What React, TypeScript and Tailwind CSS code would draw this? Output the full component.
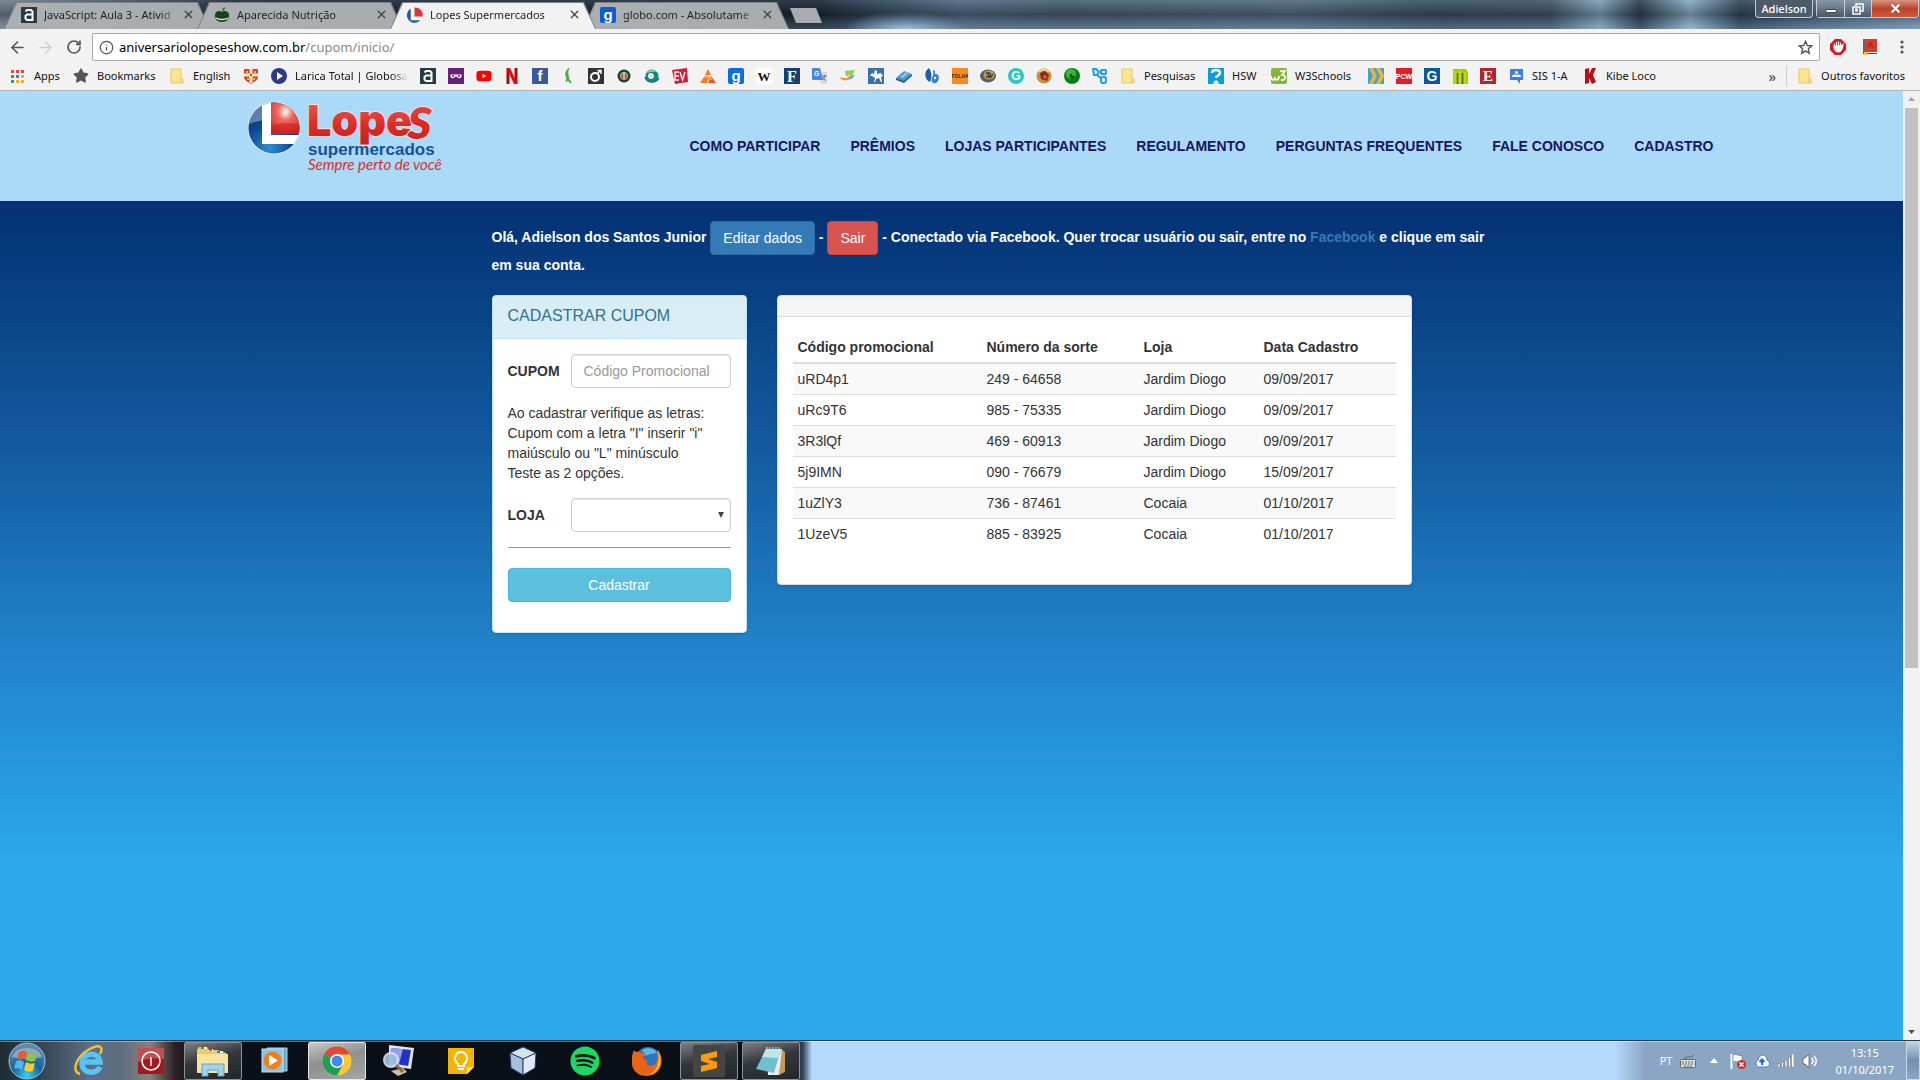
import React, { useState } from "react";
import { FaStar, FaSpotify, FaYoutube } from "react-icons/fa";
import { ArrowLeft, ArrowRight, RotateCw, Info, X } from "lucide-react";

const uiFont = "font-['Noto_Sans','Open_Sans',sans-serif]";

/* ---------- small drawings ---------- */

function Svg({ children, size = 16 }: { children: React.ReactNode; size?: number }) {
  return (
    <svg width={size} height={size} viewBox="0 0 16 16" aria-hidden="true" className="shrink-0">
      {children}
    </svg>
  );
}

function Tile({ bg, fg = "#fff", text, size = 13, serif = false, round = 0 }: { bg: string; fg?: string; text: string; size?: number; serif?: boolean; round?: number }) {
  return (
    <Svg>
      <rect width="16" height="16" rx={round} fill={bg} />
      <text x="8" y={8 + size * 0.36} textAnchor="middle" fontSize={size} fontWeight="700" fill={fg} fontFamily={serif ? "Liberation Serif" : "Liberation Sans"}>
        {text}
      </text>
    </Svg>
  );
}

/* square-cornered "a" mark on a dark tile */
const Alura = () => (
  <Svg>
    <rect width="16" height="16" fill="#263b45" />
    <path d="M4.500 4.500L6 3h4l1.500 1.500V13H6l-1.500-1.500V9L6 7.500h5" fill="none" stroke="#fff" strokeWidth="2" />
  </Svg>
);

const GreenApple = () => (
  <Svg>
    <path d="M8 5c2-2 7-1 7 3s-2 7-7 7-7-3-7-7 5-5 7-3z" fill="#17401c" />
    <path d="M8 4c0-2 1-3 3-4 0 2-1 4-3 4z" fill="#2c6b2f" />
    <path d="M2 11c3 2 9 2 12 0" stroke="#dbe8db" strokeWidth="1.500" fill="none" />
  </Svg>
);

const Folder = () => (
  <Svg>
    <path d="M2 1h10v10h2v4H2z" fill="#ffe48f" stroke="#e6c65c" />
    <path d="M12 11v4" stroke="#e6c65c" />
  </Svg>
);

const LopesBall = () => (
  <Svg>
    <path d="M6 1a7.500 7.500 0 1 0 8 11H6z" fill="#1c5fa8" />
    <path d="M5 1v11h9.500" stroke="#fff" strokeWidth="2.500" fill="none" />
    <path d="M7.500 0.500A7.500 7.500 0 0 1 15.500 9.500H7.500z" fill="#e0323c" />
  </Svg>
);

const AppsGrid = () => (
  <Svg>
    {["#e8453c", "#e8453c", "#e8453c", "#2e9e5b", "#3b78e7", "#f4b400", "#2e9e5b", "#f4b400", "#f4b400"].map((c, i) => (
      <rect key={i} x={1 + (i % 3) * 5} y={2 + Math.floor(i / 3) * 5} width="3" height="3" fill={c} />
    ))}
  </Svg>
);

const Crest = () => (
  <Svg>
    <path d="M1 1h14v8c0 3-4 5-7 7-3-2-7-4-7-7z" fill="#d2452d" />
    <path d="M8 1v14M1 7h14" stroke="#f6e7c0" strokeWidth="3" />
    <path d="M3 3h2v2H3zM11 3h2v2h-2zM4 10h2v2H4zM10 10h2v2h-2z" fill="#f0b93a" />
    <path d="M7 6h2v2H7z" fill="#c33" />
  </Svg>
);

const Play = () => (
  <Svg>
    <circle cx="8" cy="8" r="8" fill="#2d3a8c" />
    <path d="M6 4l6 4-6 4z" fill="#fff" />
  </Svg>
);

const Mask = () => (
  <Svg>
    <rect width="16" height="16" fill="#68217a" />
    <path d="M2.500 6.500h11c1 4-3 5-5.500 1.500C5.500 11.500 1.500 10.500 2.500 6.500z" fill="#fff" />
    <circle cx="5" cy="8" r="1" fill="#68217a" />
    <circle cx="11" cy="8" r="1" fill="#68217a" />
  </Svg>
);

const Leaf = () => (
  <Svg>
    <path d="M9 0C5 4 5 7 7 10l-1 4 3-3C8 7 7 4 9 0z" fill="#53a548" stroke="#53a548" />
    <path d="M7 10l4 5" stroke="#53a548" strokeWidth="2" />
  </Svg>
);

const Male = () => (
  <Svg>
    <rect width="16" height="16" fill="#333" />
    <circle cx="7" cy="9" r="4" fill="none" stroke="#fff" strokeWidth="2" />
    <path d="M9 6l4-4M9.500 2.500H13V6" stroke="#fff" strokeWidth="1.500" fill="none" />
  </Svg>
);

const Seal = () => (
  <Svg>
    <circle cx="8" cy="8" r="6.500" fill="#1f3d2a" />
    <circle cx="8" cy="8" r="4.200" fill="#7fae7f" />
    <path d="M5.500 11V7L8 5l2.500 2v4z" fill="#b5523c" />
    <path d="M8 4v7" stroke="#fff" />
  </Svg>
);

const Swirl = () => (
  <Svg>
    <circle cx="8" cy="8" r="6.500" fill="#158a6c" />
    <path d="M3 5c2-3 7-4 10-1-4-1-7 0-10 1z" fill="#bfeadf" />
    <circle cx="7" cy="8" r="3" fill="#d4f0ea" />
    <path d="M1 9c2 6 10 7 14 1" stroke="#0d6fb0" strokeWidth="1.500" fill="none" />
  </Svg>
);

const Ev = () => (
  <Svg>
    <path d="M0 2L15 0l1 14-13 2z" fill="#cf1f3c" />
    <path d="M7 4H3v8h4M3 8h4M8 4l2.500 8L13 4" stroke="#fff" strokeWidth="1.300" fill="none" />
  </Svg>
);

const Pyramid = () => (
  <Svg>
    <path d="M8 1l3 6H5zM4 9l5 1-2 5H0z" fill="#f47b20" />
    <path d="M11 8l5 7H8z" fill="#e8562a" />
    <path d="M5 8l7 3" stroke="#f6a04d" strokeWidth="2" />
  </Svg>
);

const Translate = () => (
  <Svg>
    <path d="M6 4h9v12H9z" fill="#d9dbdd" />
    <path d="M0 0h8l3 12H1a1 1 0 0 1-1-1z" fill="#4a86e8" />
    <text x="2" y="8" fontSize="7" fontWeight="700" fill="#fff" fontFamily="Liberation Sans">G</text>
    <path d="M10 8h5M12.500 7v1c0 2-1 3-2 4M11 9l3 4" stroke="#6c7a89" fill="none" />
  </Svg>
);

const Cups = () => (
  <Svg>
    <path d="M5 3l10-1-3 6-6 1z" fill="#8ed14b" />
    <path d="M9 7h6l-3 4-5 1z" fill="#6db3e8" />
    <path d="M0 9c5 2 8 1 11-1-1 4-6 6-10 3z" fill="#f2913a" />
    <path d="M1 8c3 2 6 1 9-1" stroke="#fff" fill="none" />
  </Svg>
);

const Knight = () => (
  <Svg>
    <rect width="16" height="16" fill="#3a72a8" />
    <path d="M2 8l2-3 2 1 1-4 2 1v3l4-1 2 3-2 1 1 5h-1l-2-4-3 1-1 3H6l1-4-3-2z" fill="#fff" />
  </Svg>
);

const Chip = () => (
  <Svg>
    <path d="M0 10l8-7 8 3-8 8z" fill="#4d96c9" />
    <path d="M0 10l8 3 8-7v2l-8 7-8-3z" fill="#23608f" />
    <path d="M4 9l6-5 3 1-6 5z" fill="#8dc4e6" />
  </Svg>
);

const Drops = () => (
  <Svg>
    <path d="M5 0c3 5 3 10 1 14C1 12-1 4 5 0z" fill="#1d5fae" />
    <path d="M9 2c3 0 2 3 2 4 5-1 5 6 1 9-4 1-5-2-4-5s2-5 1-8z" fill="#2f83d6" />
    <circle cx="11" cy="10" r="1.200" fill="#fff" />
  </Svg>
);

const Badge = () => (
  <Svg>
    <ellipse cx="8" cy="8" rx="8" ry="6.500" fill="#56616d" />
    <ellipse cx="9" cy="7" rx="5.500" ry="4.500" fill="#c8982e" />
    <path d="M6 5h3l-1 2 2 2H6M10 5l1 4 2-3" stroke="#2b3f66" strokeWidth="1.300" fill="none" />
  </Svg>
);

const Guard = () => (
  <Svg>
    <circle cx="8" cy="8" r="7.500" fill="#c49238" />
    <path d="M4 5l5-2 4 4-2 6-6-2z" fill="#8d2a1c" />
    <path d="M3 4c3-3 7-3 10 0" stroke="#f3d98b" strokeWidth="2" fill="none" />
    <circle cx="9" cy="9" r="2" fill="#d9583c" />
  </Svg>
);

const GreenOrb = () => (
  <Svg>
    <circle cx="8" cy="8" r="8" fill="#0f7b14" />
    <circle cx="7" cy="6" r="5" fill="#2cc233" />
    <circle cx="8" cy="8" r="2.500" fill="#0b4d10" />
    <circle cx="9" cy="7" r="0.800" fill="#bdf5bd" />
  </Svg>
);

const BlueBoxes = () => (
  <Svg>
    <g fill="none" stroke="#1d9bf0" strokeWidth="2">
      <path d="M1 1h3l3 3-2 3H2z" />
      <rect x="9" y="2" width="5" height="4" rx="1" />
      <rect x="9" y="9" width="5" height="6" rx="2" />
      <path d="M5 7l4 3" />
    </g>
  </Svg>
);

const Hsw = () => (
  <Svg>
    <rect width="16" height="16" fill="#0d9ddb" />
    <path d="M4 5c0-4 8-4 8 0 0 3-4 2-4 5" stroke="#fff" strokeWidth="2.500" fill="none" />
    <circle cx="8" cy="15" r="2.500" fill="#fff" />
  </Svg>
);

const W3 = () => (
  <Svg>
    <rect width="16" height="16" rx="2" fill="#85b53d" />
    <path d="M0 8c0 5 4 5 4 1 0 4 4 4 4-1M9 3h5l-3 4c5 0 4 6-1 5" stroke="#fff" strokeWidth="1.700" fill="none" />
  </Svg>
);

const Chevrons = () => (
  <Svg>
    <rect width="16" height="16" fill="#3fa2db" />
    <path d="M1 0h4l4 8-4 8H1l4-8zM8 0h4l4 8-4 8H8l4-8z" fill="#f2b233" />
  </Svg>
);

const Bars = () => (
  <Svg>
    <path d="M1 1h13l2 3v12H1z" fill="#a7cc00" />
    <path d="M5.500 5v11M10.500 5v11" stroke="#4d6b00" strokeWidth="1.500" />
    <path d="M3 3v12M8 3v12M13 4v11" stroke="#cde83c" />
  </Svg>
);

const Sis = () => (
  <Svg>
    <path d="M2 1h13v11h-3v4l-3-4H2z" fill="#3f7de8" />
    <circle cx="8.500" cy="4.500" r="1.500" fill="#fff" />
    <path d="M4 9c0-3 3-3 4.500-2C10 6 13 6 13 9z" fill="#fff" />
  </Svg>
);

const Netflix = () => (
  <Svg>
    <path d="M4 0v16M12 0v16" stroke="#b1060f" strokeWidth="3" />
    <path d="M2.500 0h3.500l7.500 16H10z" fill="#e50914" />
  </Svg>
);

const Kibe = () => (
  <Svg>
    <path d="M3 1l4-1v6l3-6h4l-3 7 3 7-4 2-3-6v5l-4 1z" fill="#b3111b" />
  </Svg>
);

/* ---------- browser chrome ---------- */

type Tab = { title: string; icon: React.ReactNode; active?: boolean };

const tabs: Tab[] = [
  { title: "JavaScript: Aula 3 - Ativid", icon: <Alura /> },
  { title: "Aparecida Nutrição", icon: <GreenApple /> },
  { title: "Lopes Supermercados", icon: <LopesBall />, active: true },
  { title: "globo.com - Absolutame", icon: <Tile bg="#0b5ed2" text="g" size={15} round={2} /> },
];

function TabStrip() {
  return (
    <div className="flex h-[29px] shrink-0 items-start justify-between bg-[linear-gradient(180deg,rgba(120,140,160,0.25),rgba(15,25,38,0.4)_50%,rgba(130,160,190,0.3)),radial-gradient(ellipse_60px_18px_at_905px_29px,#a9d4f7,transparent),linear-gradient(90deg,#7e8d98_0px,#17222c_240px,#17222c_820px,#33475a_880px,#566f87_960px,#4f6375_1060px,#5c7186_1290px,#3d5163_1440px,#46596a_1550px,#8fb6ca_1600px,#2c3d4e_1640px,#9cc4d8_1690px,#33475a_1740px,#4f6a80_1800px,#7f9fbd_1920px)]">
      <div role="tablist" className="flex items-start pt-0.5 pl-1">
        {tabs.map((t) => (
          <div
            key={t.title}
            className={
              "mr-[-13px] h-[27px] w-[206px] bg-[#7f8387] [clip-path:polygon(0_100%,12px_0,194px_0,100%_100%)] " + (t.active ? "relative z-10" : "")
            }
          >
            <div
              className={
                "flex h-[27px] items-center pr-[15px] pb-0.5 pl-[17px] [clip-path:polygon(1px_100%,13px_1px,193px_1px,205px_100%)] " +
                (t.active ? "bg-[#f2f2f2]" : "bg-[linear-gradient(90deg,#adb0b3,#a9acae)]")
              }
            >
              {t.icon}
              <button role="tab" aria-selected={!!t.active} className="ml-[7px] w-[136px] text-left text-[11px] leading-4 whitespace-nowrap text-[#222] [mask-image:linear-gradient(90deg,#000_85%,transparent)]">
                {t.title}
              </button>
              <button aria-label="Fechar guia" className="ml-auto text-[#444]">
                <X size={13} strokeWidth={2.5} />
              </button>
            </div>
          </div>
        ))}
        <button aria-label="Nova guia" className="mt-1.5 ml-[14px] h-[15px] w-[32px] bg-[#a9acae] [clip-path:polygon(0_0,26px_0,100%_100%,6px_100%)]" />
      </div>
      <div className="flex h-[18px] items-stretch pr-px text-white">
        <button className="mr-[3px] w-[58px] rounded-b border border-t-0 border-[#c5ccd4] bg-[#4d5a68] text-[11px] leading-4 font-medium shadow">Adielson</button>
        <div className="flex rounded-b border border-t-0 border-[#c5ccd4]">
          <button aria-label="Minimizar" className="flex w-[27px] items-center justify-center bg-[linear-gradient(#8799a9,#46586a)]">
            <span className="mt-1 h-1 w-3 rounded-xs border border-[#445] bg-white" />
          </button>
          <button aria-label="Restaurar" className="flex w-[28px] items-center justify-center border-x border-[#c5ccd4] bg-[linear-gradient(#8799a9,#46586a)]">
            <svg width="12" height="12" viewBox="0 0 12 12" fill="none" stroke="#fff" strokeWidth="1.500">
              <path d="M4 3V1h7v7H9" />
              <rect x="1" y="4" width="7" height="7" />
              <rect x="4" y="6" width="1" height="2" />
            </svg>
          </button>
          <button aria-label="Fechar" className="flex w-[46px] items-center justify-center rounded-br bg-[linear-gradient(#d99483,#c0412b_50%,#cc5a3c)]">
            <X size={13} strokeWidth={4} />
          </button>
        </div>
      </div>
    </div>
  );
}

function Toolbar() {
  return (
    <div className="flex h-[36px] shrink-0 items-center bg-[#f2f2f2] pr-[10px] pl-2 text-[#555]">
      <button aria-label="Voltar"><ArrowLeft size={19} strokeWidth={2} /></button>
      <button aria-label="Avançar" className="ml-[9px] text-[#cfcfcf]"><ArrowRight size={19} strokeWidth={2} /></button>
      <button aria-label="Recarregar" className="ml-[11px]"><RotateCw size={16} strokeWidth={2.5} /></button>
      <div className="ml-[10px] flex h-[28px] flex-1 items-center rounded-xs border border-[#a9a9a9] bg-white pr-1.5 pl-1.5">
        <Info size={15} strokeWidth={2} className="shrink-0" />
        <a href="#url" className="ml-[5px] flex-1 text-[13px] leading-5 text-[#888]">
          <span className="text-black">aniversariolopeseshow.com.br</span>/cupom/inicio/
        </a>
        <button aria-label="Favoritar">
          <svg width="15" height="15" viewBox="0 0 16 16" fill="none" stroke="#555" strokeWidth="1.500">
            <path d="M8 1.500l1.900 4.400 4.700.4-3.600 3.100 1.100 4.700L8 11.600l-4.100 2.500L5 9.400 1.400 6.300l4.700-.4z" />
          </svg>
        </button>
      </div>
      <button aria-label="Bloqueador" className="ml-[10px]">
        <Svg>
          <path d="M5 0h6l5 5v6l-5 5H5l-5-5V5z" fill="#e1141b" />
          <path d="M4.500 8V4.500M6.500 7V3M8.500 7V2.500M10.500 8V3.500M4 7h7.500l1.500-1.500c0 4-2 7-4 7.500-3 0-5-2-5-6z" stroke="#fff" strokeWidth="1.200" fill="#fff" />
        </Svg>
      </button>
      <button aria-label="Dicionário" className="ml-[16px]">
        <Svg>
          <path d="M1 0h14v13H1z" fill="#d63b30" />
          <path d="M1 0h3v14H1z" fill="#666" />
          <path d="M1 14h14v1H1z" fill="#b7222a" />
          <path d="M6 9l2.500-6L11 9M7 7h3" stroke="#a3231b" fill="none" />
          <path d="M2 13h3v3H2z" fill="#f3c13a" />
        </Svg>
      </button>
      <button aria-label="Menu" className="ml-[16px]">
        <svg width="16" height="16" viewBox="0 0 16 16" fill="#555">
          <circle cx="8" cy="3" r="1.600" /><circle cx="8" cy="8" r="1.600" /><circle cx="8" cy="13" r="1.600" />
        </svg>
      </button>
    </div>
  );
}

type Mark = { icon: React.ReactNode; label?: string; width?: string; name?: string };

const marks: Mark[] = [
  { icon: <AppsGrid />, label: "Apps", width: "w-[51px]" },
  { icon: <FaStar size={15} className="w-4 shrink-0 text-[#555]" />, label: "Bookmarks", width: "w-[84px]" },
  { icon: <Folder />, label: "English", width: "w-[62px]" },
  { icon: <Crest />, name: "Brasão" },
  { icon: <Play />, label: "Larica Total | Globosa", width: "w-[137px]" },
  { icon: <Alura />, name: "Alura" },
  { icon: <Mask />, name: "Máscara" },
  { icon: <FaYoutube size={16} className="text-[#f00]" />, name: "YouTube" },
  { icon: <Netflix />, name: "Netflix" },
  { icon: <Tile bg="#3b5998" text="f" size={15} />, name: "Facebook" },
  { icon: <Leaf />, name: "Folha verde" },
  { icon: <Male />, name: "Portal" },
  { icon: <Seal />, name: "Selo" },
  { icon: <Swirl />, name: "Globo" },
  { icon: <Ev />, name: "EV" },
  { icon: <Pyramid />, name: "Pirâmide" },
  { icon: <Tile bg="#0b6ee0" text="g" size={15} round={2} />, name: "globo.com" },
  { icon: <Tile bg="#fff" fg="#111" text="W" size={13} serif round={3} />, name: "Wikipedia" },
  { icon: <Tile bg="#14406f" text="F" size={16} serif />, name: "F" },
  { icon: <Translate />, name: "Tradutor" },
  { icon: <Cups />, name: "Xícaras" },
  { icon: <Knight />, name: "Cavaleiro" },
  { icon: <Chip />, name: "Chip" },
  { icon: <Drops />, name: "Gotas" },
  { icon: <Tile bg="#f68b1f" fg="#3a2410" text="FOLHA" size={5} />, name: "Folha" },
  { icon: <Badge />, name: "Emblema" },
  { icon: <Tile bg="#2cc8bd" text="G" size={12} round={8} />, name: "G" },
  { icon: <Guard />, name: "Guarda" },
  { icon: <GreenOrb />, name: "Orbe" },
  { icon: <BlueBoxes />, name: "Caixas" },
  { icon: <Folder />, label: "Pesquisas", width: "w-[76px]" },
  { icon: <Hsw />, label: "HSW", width: "w-[51px]" },
  { icon: <W3 />, label: "W3Schools", width: "w-[85px]" },
  { icon: <Chevrons />, name: "Setas" },
  { icon: <Tile bg="#e31e26" text="PCW" size={7} />, name: "PCW" },
  { icon: <Tile bg="#08599c" text="G" size={14} />, name: "G1" },
  { icon: <Bars />, name: "M" },
  { icon: <Tile bg="#b3262b" text="E" size={15} serif />, name: "E" },
  { icon: <Sis />, label: "SIS 1-A", width: "w-[62px]" },
  { icon: <Kibe />, label: "Kibe Loco", width: "w-[80px]" },
];

function BookmarkBar() {
  return (
    <nav aria-label="Favoritos" className="flex h-[26px] shrink-0 items-center gap-3 border-b border-[#b4b4b4] bg-[#f2f2f2] pr-[15px] pb-1 pl-[10px] text-[11px] leading-4 text-[#111]">
      {marks.map((m, i) => (
        <a key={i} href="#favorito" aria-label={m.name} className={"flex h-4 shrink-0 items-center gap-2 whitespace-nowrap " + (m.width ?? "w-4")}>
          {m.icon}
          {m.label && <span className={m.label.startsWith("Larica") ? "[mask-image:linear-gradient(90deg,#000_85%,transparent)]" : ""}>{m.label}</span>}
        </a>
      ))}
      <div className="ml-auto flex items-center">
        <button aria-label="Mais favoritos" className="text-[15px] leading-4 text-[#444]">»</button>
        <span className="mx-[10px] h-5 w-px bg-[#ccc]" />
        <a href="#outros" className="flex items-center gap-2 whitespace-nowrap"><Folder />Outros favoritos</a>
      </div>
    </nav>
  );
}

/* ---------- site ---------- */

function Logo() {
  return (
    <svg width="200" height="76" viewBox="0 0 200 76" role="img" aria-label="Lopes Supermercados">
      <defs>
        <radialGradient id="ball" cx="40%" cy="85%" r="80%">
          <stop offset="0" stopColor="#2f8ed0" />
          <stop offset="0.500" stopColor="#0c4a94" />
          <stop offset="1" stopColor="#0a2a6b" />
        </radialGradient>
        <radialGradient id="shine" cx="45%" cy="35%" r="70%">
          <stop offset="0" stopColor="#fff" />
          <stop offset="0.350" stopColor="#ef6a62" />
          <stop offset="1" stopColor="#d3201f" />
        </radialGradient>
        <linearGradient id="word" x1="0" y1="0" x2="0" y2="1">
          <stop offset="0" stopColor="#f0685f" />
          <stop offset="0.600" stopColor="#dc2c27" />
          <stop offset="1" stopColor="#c4201d" />
        </linearGradient>
        <clipPath id="disc"><circle cx="27" cy="28" r="25.500" /></clipPath>
      </defs>
      <circle cx="27" cy="28" r="26.500" fill="#d4e9f7" />
      <g clipPath="url(#disc)">
        <rect width="56" height="56" fill="url(#ball)" />
        <path d="M0 0h16v20C10 22 5 22 0 25z" fill="#fff" opacity="0.350" />
        <path d="M15 0h9v35h30v9H15z" fill="#fff" />
        <path d="M24 0h32v34H24z" fill="url(#shine)" />
        <path d="M24 26c10-4 20-3 30-1v9H24z" fill="#c9201f" opacity="0.600" />
      </g>
      <g stroke="#f6dfe2" strokeWidth="2" paintOrder="stroke" fill="url(#word)">
        <text x="60" y="36" fontSize="43" fontFamily="Inter, sans-serif" fontWeight="900">Lope</text>
        <text x="161" y="39" fontSize="60" fontStyle="italic" fontFamily="Lato, sans-serif" fontWeight="900">s</text>
      </g>
      <text x="61" y="55" fontSize="17" fontWeight="700" fill="#16509a" fontFamily="Liberation Sans, sans-serif">supermercados</text>
      <text x="61" y="70" fontSize="15" fontStyle="italic" fill="#d92f2c" fontFamily="Lato, sans-serif">Sempre perto de você</text>
    </svg>
  );
}

const links = ["COMO PARTICIPAR", "PRÊMIOS", "LOJAS PARTICIPANTES", "REGULAMENTO", "PERGUNTAS FREQUENTES", "FALE CONOSCO", "CADASTRO"];

const rows = [
  ["uRD4p1", "249 - 64658", "Jardim Diogo", "09/09/2017"],
  ["uRc9T6", "985 - 75335", "Jardim Diogo", "09/09/2017"],
  ["3R3lQf", "469 - 60913", "Jardim Diogo", "09/09/2017"],
  ["5j9IMN", "090 - 76679", "Jardim Diogo", "15/09/2017"],
  ["1uZlY3", "736 - 87461", "Cocaia", "01/10/2017"],
  ["1UzeV5", "885 - 83925", "Cocaia", "01/10/2017"],
];

function CouponForm() {
  const [code, setCode] = useState("");
  return (
    <section className="w-[255px] shrink-0 rounded-sm border border-[#bce8f1] bg-white pb-[30px] shadow-sm">
      <h3 className="h-[43px] rounded-t-[3px] border-b border-[#bce8f1] bg-[#d9edf7] px-[15px] py-[10px] text-[16px] leading-5 text-[#31708f]">CADASTRAR CUPOM</h3>
      <form className="px-[15px] pt-[15px]" onSubmit={(e) => e.preventDefault()}>
        <div className="flex items-center justify-between">
          <label htmlFor="cupom" className="font-bold">CUPOM</label>
          <input id="cupom" value={code} onChange={(e) => setCode(e.target.value)} placeholder="Código Promocional" className="h-[34px] w-[160px] rounded-sm border border-[#ccc] px-3 shadow-[inset_0_1px_1px_rgba(0,0,0,0.075)] placeholder:text-[#999]" />
        </div>
        <p className="py-[15px]">
          Ao cadastrar verifique as letras:<br />Cupom com a letra "I" inserir "i" maiúsculo ou "L" minúsculo<br />Teste as 2 opções.
        </p>
        <div className="flex items-center justify-between">
          <label htmlFor="loja" className="font-bold">LOJA</label>
          <div className="relative">
            <select id="loja" defaultValue="" className="block h-[34px] w-[160px] appearance-none rounded-sm border border-[#ccc] bg-white px-3 shadow-[inset_0_1px_1px_rgba(0,0,0,0.075)]">
              <option value=""></option>
              <option>Jardim Diogo</option>
              <option>Cocaia</option>
            </select>
            <svg width="6" height="6" viewBox="0 0 6 6" className="pointer-events-none absolute top-[14px] right-[7px]"><path d="M0 0h6L3 6z" fill="#444" /></svg>
          </div>
        </div>
        <hr className="mt-[15px] mb-5 border-[#999]" />
        <button type="submit" className="h-[34px] w-full rounded-sm border border-[#46b8da] bg-[#5bc0de] text-white">Cadastrar</button>
      </form>
    </section>
  );
}

function CouponTable() {
  return (
    <section className="w-[635px] shrink-0 rounded-sm border border-[#ddd] bg-white pb-5 shadow-sm">
      <div className="h-[21px] rounded-t-[3px] border-b border-[#ddd] bg-[#f5f5f5]" />
      <div className="p-[15px]">
        <table className="w-full table-fixed border-collapse text-left">
          <colgroup>
            <col className="w-[189px]" /><col className="w-[157px]" /><col className="w-[120px]" /><col />
          </colgroup>
          <thead>
            <tr className="border-b-2 border-[#ddd]">
              {["Código promocional", "Número da sorte", "Loja", "Data Cadastro"].map((h) => (
                <th key={h} scope="col" className="p-[5px] font-bold">{h}</th>
              ))}
            </tr>
          </thead>
          <tbody>
            {rows.map((r) => (
              <tr key={r[0]} className="border-t border-[#ddd] odd:bg-[#f9f9f9]">
                {r.map((c, i) => <td key={i} className="p-[5px]">{c}</td>)}
              </tr>
            ))}
          </tbody>
        </table>
      </div>
    </section>
  );
}

function Site() {
  return (
    <div className="flex min-w-0 flex-1 flex-col bg-[linear-gradient(#043275_120px,#135ca1_364px,#2080c6_540px,#2798dc_680px,#2ea8ec_780px)] font-['Liberation_Sans',Arial,sans-serif] text-[14px] leading-5 text-[#333]">
      <header className="h-[110px] bg-[#abd9f8]">
        <div className="mx-auto flex max-w-[1524px] justify-between pl-[57px]">
          <a href="#inicio" className="mt-[9px]"><Logo /></a>
          <nav aria-label="Principal" className="mt-[45px] flex gap-[30px] font-bold text-[#16165f]">
            {links.map((l) => <a key={l} href="#secao" className="whitespace-nowrap">{l}</a>)}
          </nav>
        </div>
      </header>
      <main className="mx-auto w-full max-w-[1170px] pt-[20px] pl-[125px]">
        <p className="max-w-[1004px] font-bold text-white">
          Olá, Adielson dos Santos Junior{" "}
          <button className="h-[34px] rounded-sm border border-[#2e6da4] bg-[#337ab7] px-3 align-middle leading-5 font-normal">Editar dados</button>
          {" "}-{" "}
          <button className="h-[34px] rounded-sm border border-[#d43f3a] bg-[#d9534f] px-3 align-middle leading-5 font-normal">Sair</button>
          {" "}- Conectado via Facebook. Quer trocar usuário ou sair, entre no{" "}
          <a href="#facebook" className="text-[#337ab7]">Facebook</a> e clique em sair em sua conta.
        </p>
        <div className="mt-5 flex items-start gap-[30px]">
          <CouponForm />
          <CouponTable />
        </div>
      </main>
    </div>
  );
}

function ScrollBar() {
  return (
    <div aria-hidden="true" className="flex w-[17px] shrink-0 flex-col items-center bg-[#f1f1f1]">
      <svg width="17" height="17" viewBox="0 0 17 17" className="shrink-0"><path d="M5 10h7L8.500 6z" fill="#a3a3a3" /></svg>
      <div className="h-[59%] w-[13px] bg-[#c1c1c1]" />
      <svg width="17" height="17" viewBox="0 0 17 17" className="mt-auto shrink-0"><path d="M5 7h7l-3.500 4z" fill="#505050" /></svg>
    </div>
  );
}

/* ---------- taskbar ---------- */

const StartOrb = () => (
  <svg width="38" height="38" viewBox="0 0 38 38">
    <defs>
      <radialGradient id="orb" cx="50%" cy="90%" r="80%">
        <stop offset="0" stopColor="#35d3ff" /><stop offset="0.500" stopColor="#16619b" /><stop offset="1" stopColor="#5f8aa8" />
      </radialGradient>
    </defs>
    <circle cx="19" cy="19" r="18" fill="url(#orb)" stroke="#9fc3da" />
    <path d="M4 15C8 3 30 3 34 15c-10 3-20 3-30 0z" fill="#fff" opacity="0.350" />
    <path d="M11 10c3-2 5-1 8 0l-2 8c-3-2-5-2-8-1z" fill="#f1592a" />
    <path d="M20 11c3 1 6 2 9 0l-2 8c-3 1-6 1-9-1z" fill="#8cc63f" />
    <path d="M8 19c3-1 6-1 8 1l-2 8c-3-2-5-2-8-1z" fill="#4db8f0" />
    <path d="M18 20c3 2 6 2 9 1l-2 8c-3 1-6 1-9-1z" fill="#fdc82f" />
  </svg>
);

const Ie = () => (
  <svg width="32" height="32" viewBox="0 0 32 32" fill="none">
    <path d="M27 22c-4 8-18 7-18-4S26 6 27 17H11" stroke="#59c3f3" strokeWidth="5.500" />
    <path d="M7 29C-2 27 3 12 15 5S31 2 27 9" stroke="#f5c12e" strokeWidth="2.500" />
  </svg>
);

const Power = () => (
  <svg width="26" height="26" viewBox="0 0 26 26" fill="none">
    <rect width="26" height="26" rx="1" fill="#9d1b20" />
    <path d="M0 0h26v11C16 9 8 11 0 14z" fill="#d97476" opacity="0.600" />
    <circle cx="13" cy="13" r="9" stroke="#fff" strokeWidth="1.500" /><path d="M13 9v9" stroke="#fff" strokeWidth="1.500" />
  </svg>
);

const Explorer = () => (
  <svg width="34" height="32" viewBox="0 0 34 32">
    <path d="M1 5L3 2h8l2 3h8l9 3 2 3v16H1z" fill="#e9cd6c" />
    <path d="M5 2h5v2H5zM14 4h3v2h-3zM21 6h6v2h-6z" fill="#fff" />
    <path d="M5 2h3v2H5z" fill="#2f9e3f" /><path d="M14 4h2v2h-2z" fill="#d8452f" /><path d="M21 6h3v2h-3z" fill="#2b86c9" />
    <path d="M1 9h31v19H1z" fill="#f7e49c" />
    <path d="M6 19h22v12h-6v-6H12v6H6z" fill="#9fd3ea" stroke="#5ca4c6" />
  </svg>
);

const Wmp = () => (
  <svg width="28" height="28" viewBox="0 0 28 28">
    <path d="M6 1h20v23H6z" fill="#6fa9cc" stroke="#a9d4ea" />
    <rect x="1" y="2" width="21" height="23" fill="#8cc3e0" stroke="#bfe3f3" />
    <circle cx="11.500" cy="13.500" r="9" fill="#f07f1c" /><path d="M8 8l9 5.500L8 19z" fill="#fff" />
  </svg>
);

const Chrome = () => (
  <svg width="30" height="30" viewBox="0 0 30 30">
    <circle cx="15" cy="15" r="14.500" fill="#fcc934" />
    <path d="M15 15L2.400 7.800A14.500 14.500 0 0 0 15 29.500L21 18.500z" fill="#1e9e58" />
    <path d="M15 15L2.400 7.800A14.500 14.500 0 0 1 27.900 8.500H15z" fill="#e0483c" />
    <circle cx="15" cy="15" r="7" fill="#fff" /><circle cx="15" cy="15" r="5.500" fill="#4285f4" />
  </svg>
);

const Monitor = () => (
  <svg width="32" height="32" viewBox="0 0 32 32">
    <path d="M6 0l25 3-3 21-22-3z" fill="#e4e6ea" />
    <path d="M8 3l20 2-3 16-18-3z" fill="#1f32c9" /><path d="M8 3l12 1-4 15-9-1z" fill="#8fa0f2" />
    <path d="M8 26l12-3 4 4-9 4z" fill="#c8bfae" />
    <circle cx="8" cy="15" r="7" fill="#9fbfe4" stroke="#dfe4ea" strokeWidth="2" opacity="0.900" />
    <path d="M13 20l7 7" stroke="#9a6636" strokeWidth="3" />
  </svg>
);

const Keep = () => (
  <svg width="26" height="26" viewBox="0 0 26 26">
    <path d="M0 0h26v19l-7 7H0z" fill="#f5b400" /><path d="M26 19h-7v7z" fill="#fde293" />
    <path d="M10 16c-6-5-2-12 3-12s9 7 3 12v2h-6z" fill="none" stroke="#fff" strokeWidth="2" /><path d="M10 21h6" stroke="#fff" strokeWidth="2" />
  </svg>
);

const Cube = () => (
  <svg width="30" height="30" viewBox="0 0 30 30" stroke="#2c3d7d" strokeWidth="1">
    <path d="M15 1l13 6-13 6L2 7z" fill="#d4e6ea" /><path d="M2 7l13 6v16L3 22z" fill="#a9bfdb" /><path d="M28 7l-13 6v16l12-7z" fill="#dfe8f4" />
  </svg>
);

const Firefox = () => (
  <svg width="30" height="30" viewBox="0 0 30 30">
    <circle cx="16" cy="14" r="13" fill="#2b74c0" /><path d="M10 4c5-3 12-2 15 2-4 3-8 1-11 4z" fill="#5fb6e4" />
    <path d="M2 4c1 2 3 2 5 2 3 1 5 1 7 3-3 1-3 3-3 4 5 0 5 3 3 5 3 3 9 2 11-3 1-5-1-9 1-11 7 9 4 25-11 26C-1 30-3 15 2 4z" fill="#e8641b" />
    <path d="M26 5c6 10 1 22-9 24 9-5 11-14 9-24z" fill="#fbc52d" />
  </svg>
);

const Sublime = () => (
  <svg width="32" height="32" viewBox="0 0 32 32">
    <rect width="32" height="32" rx="2" fill="#454545" />
    <path d="M8 10l16-4v6l-9 2 9 3v6L8 27v-6l9-2-9-3z" fill="#ff9a0b" />
  </svg>
);

const Notepad = () => (
  <svg width="32" height="30" viewBox="0 0 32 30">
    <path d="M26 3l4 3v20l-6 3z" fill="#c39b56" /><path d="M11 3h16l-3 26H13z" fill="#e6eef0" />
    <path d="M11 3h15L19 27 1 23z" fill="#6fc0cf" /><path d="M11 3h15l-3 9-16-1z" fill="#bfe4ea" />
    <path d="M12 1v3M15 1v3M18 1v3M21 1v3M24 1v3" stroke="#ddd" />
  </svg>
);

const apps: { name: string; icon: React.ReactNode; state?: "open" | "front" }[] = [
  { name: "Internet Explorer", icon: <Ie /> },
  { name: "Desligar", icon: <Power /> },
  { name: "Explorador", icon: <Explorer />, state: "open" },
  { name: "Media Player", icon: <Wmp /> },
  { name: "Chrome", icon: <Chrome />, state: "front" },
  { name: "Pesquisa", icon: <Monitor /> },
  { name: "Keep", icon: <Keep /> },
  { name: "NetBeans", icon: <Cube /> },
  { name: "Spotify", icon: <FaSpotify size={30} className="text-[#1ed760]" /> },
  { name: "Firefox", icon: <Firefox /> },
  { name: "Sublime Text", icon: <Sublime />, state: "open" },
  { name: "Bloco de notas", icon: <Notepad />, state: "open" },
];

const appStyle = {
  none: "",
  open: "border border-[#8d9399] bg-[linear-gradient(165deg,#7c8085,#33373c_45%,#23272c)]",
  front: "border border-[#e6e6e6] bg-[linear-gradient(165deg,#c9c9c9,#8e8f90_45%,#a5a5a5)]",
};

function Taskbar() {
  return (
    <footer className="flex h-10 shrink-0 items-center border-t border-[#2c3b49] bg-[linear-gradient(90deg,#1d2b33_0px,#33434f_40px,#5b6f86_90px,#5d6d80_120px,#8b7f7c_150px,#2a2024_175px,#0a1018_200px,#0a1018_790px,#33475c_803px,#b5d8fb_812px,#b5d8fb_1615px,#8ba6c3_1645px,#8ba6c3_100%)] shadow-[inset_0_1px_0_rgba(255,255,255,0.4)]">
      <button aria-label="Iniciar" className="flex w-[58px] justify-start pl-2"><StartOrb /></button>
      {apps.map((a) => (
        <button key={a.name} aria-label={a.name} className={"mx-0.5 flex h-[38px] w-[58px] items-center justify-center rounded-xs " + appStyle[a.state ?? "none"]}>
          {a.icon}
        </button>
      ))}
      <div className="ml-auto flex h-full items-center text-white">
        <span className="mr-2 text-[11px] leading-4">PT</span>
        <svg width="16" height="14" viewBox="0 0 16 14" fill="none" stroke="#666" className="mr-[14px]">
          <rect x="0.500" y="5.500" width="15" height="8" rx="1" fill="#ddd" /><path d="M2 8h12M2 10h12M4 12h8" strokeDasharray="2 1" /><path d="M5 5c0-4 4 0 9-4" />
        </svg>
        <svg width="8" height="5" viewBox="0 0 8 5" className="mr-[12px]"><path d="M0 5h8L4 0z" fill="#fff" /></svg>
        <svg width="16" height="16" viewBox="0 0 16 16" className="mr-2">
          <path d="M1.500 1v15" stroke="#fff" strokeWidth="2" /><path d="M3 2c4-2 6 2 9 0v7c-3 2-5-2-9 0z" fill="#fff" stroke="#555" strokeWidth="0.500" />
          <circle cx="11.500" cy="11.500" r="4.500" fill="#d92c25" /><path d="M9.500 9.500l4 4M13.500 9.500l-4 4" stroke="#fff" strokeWidth="1.500" />
        </svg>
        <svg width="16" height="14" viewBox="0 0 16 14" className="mr-2">
          <path d="M4 13a4 4 0 0 1 0-7c1-7 9-6 9 0 4 2 3 7-1 7z" fill="#fff" stroke="#3f7de8" /><path d="M8 11V6M5.500 8L8 5.500 10.500 8" stroke="#2a66d8" strokeWidth="2" fill="none" />
        </svg>
        <svg width="16" height="13" viewBox="0 0 16 13" fill="#fff" stroke="#667" strokeWidth="0.500" className="mr-2">
          <path d="M0 10h2v3H0zM3.500 8h2v5h-2zM7 6h2v7H7zM10.500 3h2v10h-2zM13.500 0H16v13h-2.500z" />
        </svg>
        <svg width="17" height="16" viewBox="0 0 17 16" fill="none" stroke="#fff" strokeWidth="1.500" className="mr-[16px]">
          <path d="M1 5h2l4-4v14l-4-4H1z" fill="#fff" stroke="#555" strokeWidth="0.800" /><path d="M9.500 5c2 2 2 4 0 6M12 3c3 3 3 7 0 10" />
        </svg>
        <time className="mr-3 text-center text-[11px] leading-[17px]">13:15<br />01/10/2017</time>
        <button aria-label="Mostrar área de trabalho" className="h-full w-[14px] border border-[#c9d8e6] bg-[linear-gradient(#c0d2e2,#7590ad_50%,#8aa6c4)]" />
      </div>
    </footer>
  );
}

export default function App() {
  return (
    <div className={"flex h-screen flex-col overflow-hidden " + uiFont}>
      <TabStrip />
      <Toolbar />
      <BookmarkBar />
      <div className="flex min-h-0 flex-1">
        <Site />
        <ScrollBar />
      </div>
      <Taskbar />
    </div>
  );
}
